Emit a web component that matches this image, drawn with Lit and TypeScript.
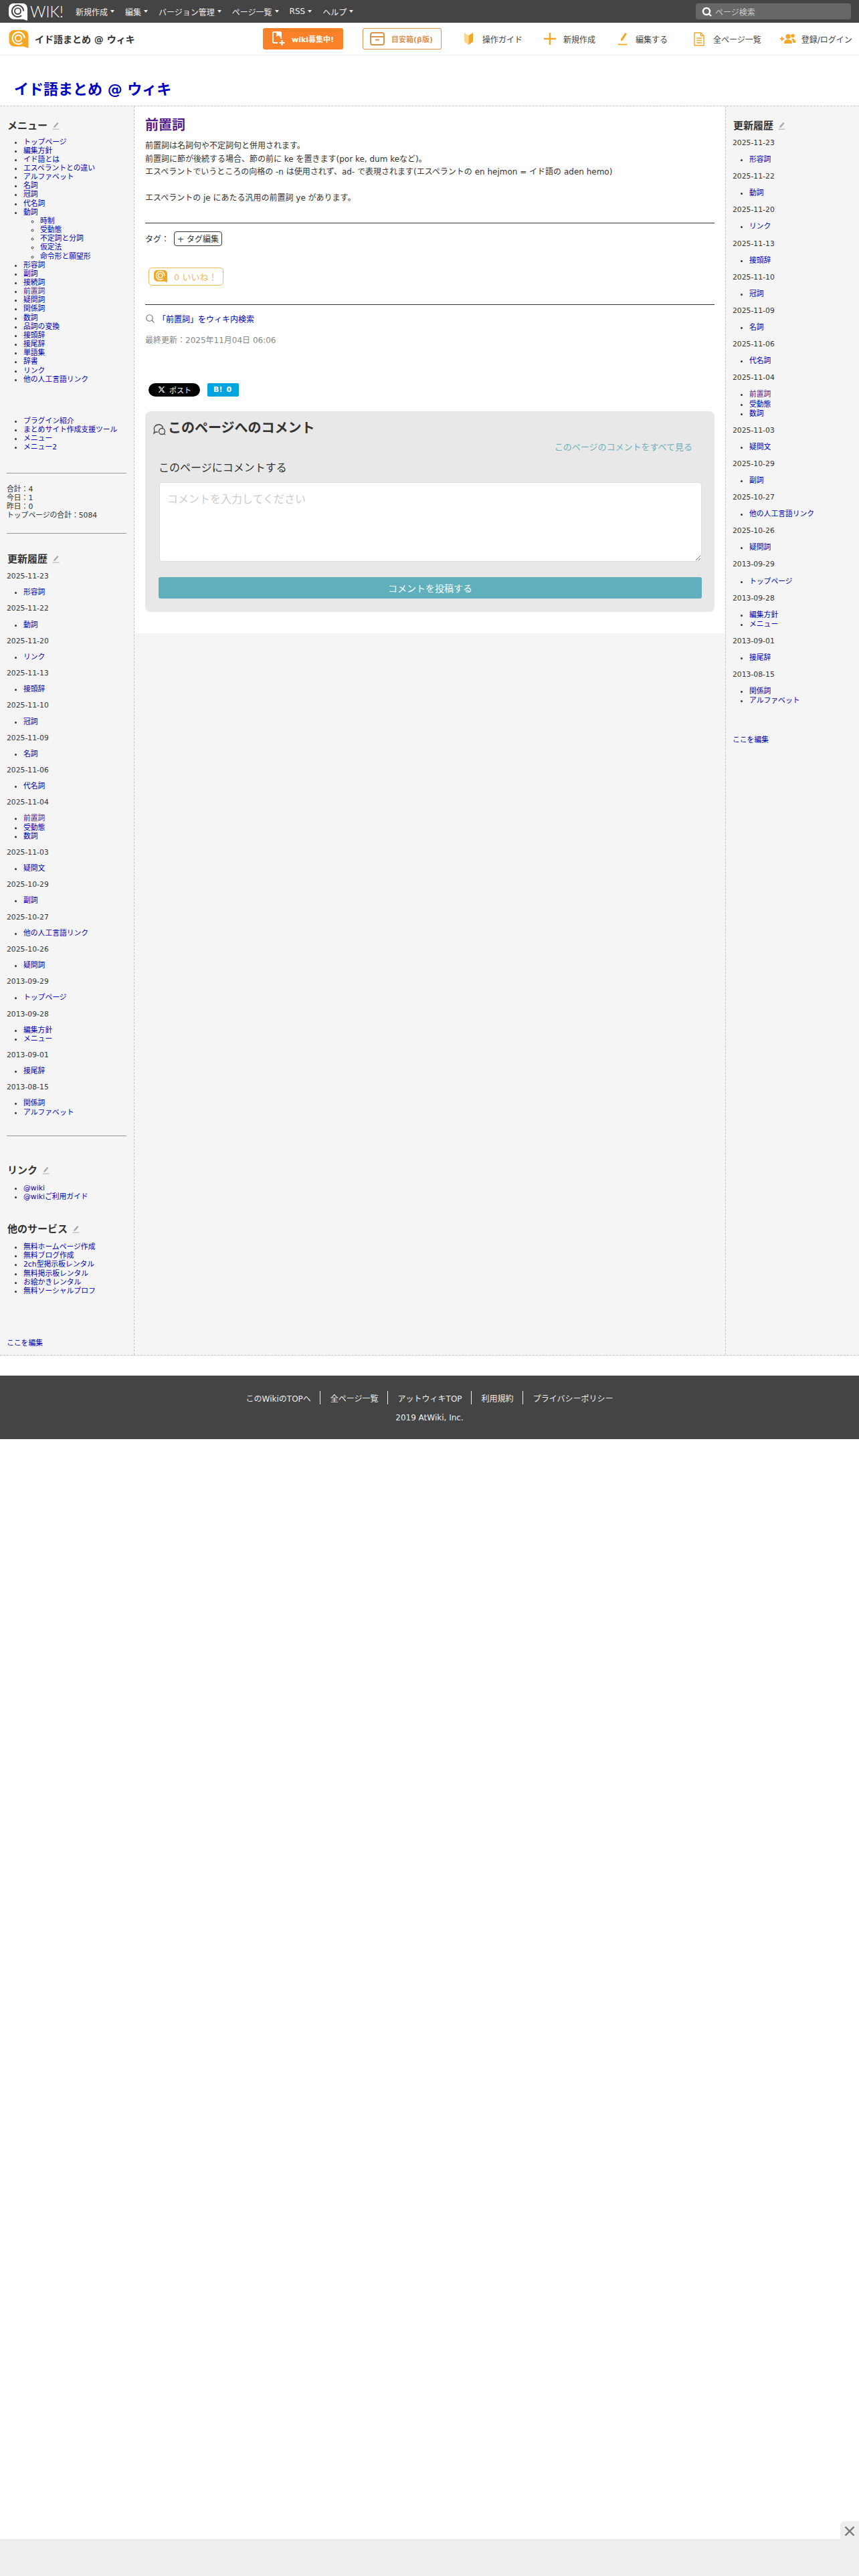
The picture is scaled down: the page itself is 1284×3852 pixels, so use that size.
import { LitElement, html, css, svg } from "lit";
import { customElement } from "lit/decorators.js";

type L = [string, boolean?];

const bubble = (bg: string, fg: string, cls: string) => html`<svg class=${cls} viewBox="0 0 32 30">
  <path d="M9 1h14a8 8 0 0 1 8 8v20l-7-2.500H9a8 8 0 0 1-8-8V9a8 8 0 0 1 8-8z" fill=${bg}/>
  ${svg`<circle cx="15.5" cy="13.5" r="9.3" fill="none" stroke=${fg} stroke-width="2.2" stroke-dasharray="50 8" transform="rotate(50 15.5 13.5)"/>
  <circle cx="15.5" cy="13.5" r="4.8" fill="none" stroke=${fg} stroke-width="2"/>`}
</svg>`;

const pencil = html`<svg class="pen" viewBox="0 0 11 12"><path d="M7.6 1 9.6 2.2 4.4 8.4 2.3 9 2.4 6.9z" fill="#aaa"/><path d="M0.5 11.2h10" stroke="#aaa" stroke-width="1"/></svg>`;

const recent: [string, L[]][] = [
  ["2025-11-23", [["形容詞"]]],
  ["2025-11-22", [["動詞"]]],
  ["2025-11-20", [["リンク"]]],
  ["2025-11-13", [["接頭辞"]]],
  ["2025-11-10", [["冠詞"]]],
  ["2025-11-09", [["名詞"]]],
  ["2025-11-06", [["代名詞"]]],
  ["2025-11-04", [["前置詞", true], ["受動態"], ["数詞"]]],
  ["2025-11-03", [["疑問文"]]],
  ["2025-10-29", [["副詞"]]],
  ["2025-10-27", [["他の人工言語リンク"]]],
  ["2025-10-26", [["疑問詞"]]],
  ["2013-09-29", [["トップページ"]]],
  ["2013-09-28", [["編集方針"], ["メニュー"]]],
  ["2013-09-01", [["接尾辞"]]],
  ["2013-08-15", [["関係詞"], ["アルファベット"]]],
];

const li = (l: L) => html`<li><a class=${l[1] ? "vis" : ""} href="#">${l[0]}</a></li>`;
const names = (s: string) => s.split(" ").map((n) => [n] as L);

@customElement("app-root")
export class AppRoot extends LitElement {
  static styles = css`
    :host { display: block; background: #fff; color: #333; font-family: "DejaVu Sans", "Noto Sans CJK JP", sans-serif; font-size: 12px; }
    * { box-sizing: border-box; }
    a { color: #0000bb; text-decoration: none; }
    a.vis { color: #551a8b; }
    .top { height: 34px; background: #444; display: flex; align-items: center; padding-left: 12px; color: #eee; }
    .logo { display: flex; align-items: center; width: 101px; height: 34px; }
    .logo-ic { width: 30px; height: 28px; margin-top: 2px; }
    .logo-tx { font-family: Lato, sans-serif; font-weight: 300; font-size: 23px; color: #fff; margin-left: 3px; line-height: 34px; }
    .nav { display: flex; gap: 16px; }
    .nav span { display: flex; align-items: center; white-space: nowrap; }
    .nav i { width: 0; height: 0; margin-left: 4px; border: 3.5px solid transparent; border-top: 4px solid #eee; border-bottom: 0; }
    .search { margin-left: auto; margin-right: 12px; width: 232px; height: 24px; background: #666; border-radius: 3px; display: flex; align-items: center; color: #ccc; padding-left: 9px; }
    .search svg { width: 15px; height: 15px; margin-right: 5px; }
    .sub { height: 49px; border-bottom: 1px solid #eee; display: flex; align-items: center; padding-left: 12px; }
    .sub-ic { width: 32px; height: 29px; }
    .sub-title { font-size: 14px; font-weight: bold; color: #333; margin-left: 8px; width: 341px; white-space: nowrap; }
    .btn { height: 32px; border-radius: 3px; display: flex; align-items: center; font-size: 11px; font-weight: bold; white-space: nowrap; }
    .btn1 { width: 120px; background: #fb8129; color: #fff; padding-left: 14px; }
    .btn2 { width: 118px; margin-left: 29px; border: 1px solid #d9924f; color: #d9924f; padding-left: 10px; }
    .btn svg { flex: none; }
    .bi1 { width: 20px; height: 22px; margin-right: 9px; }
    .bi2 { width: 22px; height: 20px; margin-right: 10px; }
    .g { display: flex; align-items: center; white-space: nowrap; color: #444; }
    .g svg { flex: none; }
    .g1 { margin-left: 33px; } .g1 svg { width: 15px; height: 20px; margin-right: 13px; }
    .g2 { margin-left: 32px; } .g2 svg { width: 18px; height: 18px; margin-right: 11px; }
    .g3 { margin-left: 33px; } .g3 svg { width: 15px; height: 20px; margin-right: 12px; }
    .g4 { margin-left: 39px; } .g4 svg { width: 16px; height: 21px; margin-right: 13px; }
    .g5 { margin-left: 28px; } .g5 svg { width: 24px; height: 16px; margin-right: 8px; }
    h1 { margin: 0; height: 75px; padding: 38px 0 0 21px; font-size: 22px; line-height: 26px; font-weight: bold; }
    h1 a { color: #0000c4; }
    .cols { display: flex; border-top: 1px dashed #c4c4c4; border-bottom: 1px dashed #c4c4c4; background: #f5f5f5; align-items: stretch; }
    .side { width: 200px; flex: none; padding: 0 10px; line-height: 13.15px; font-size: 10.8px; }
    .left { border-right: 1px dashed #c4c4c4; width: 201px; }
    .right { width: 200px; border-left: 1px dashed #c4c4c4; line-height: 14.1px; }
    .side h3 { margin: 0; padding-left: 1px; font-size: 15px; line-height: 20px; font-weight: bold; color: #333; display: flex; align-items: center; }
    .pen { width: 11px; height: 12px; margin-left: 7px; }
    .side ul { margin: 0; padding: 0 0 0 25px; }
    .side ul ul { list-style: circle; }
    .side h3.m0 { margin-top: 19px; }
    .side ul.l0 { margin-top: 7.5px; }
    .side ul.l1 { margin-top: 49px; }
    .side hr { width: 179px; margin: 0; border: 0; border-top: 1px solid #999; height: 1px; }
    .side hr.hr1 { margin-top: 31px; }
    .count { margin-top: 17px; }
    .side hr.hr2 { margin-top: 20px; }
    .side h3.h-rec { margin-top: 28px; }
    .rec { margin-top: 9px; }
    .rec ul.it { margin: 11px 0; }
    .side hr.hr3 { margin-top: 28px; }
    .side h3.h-link { margin-top: 41px; }
    .side ul.l2 { margin-top: 10px; }
    .side h3.h-oth { margin-top: 32px; }
    .edit { margin-top: 65px; display: block; }
    .edit-r { margin-top: 45px; display: block; }
    .pad-b { height: 11px; }
    .main { flex: 1; min-width: 0; }
    .panel { background: #fff; height: 788px; padding: 0 16px; }
    .panel h2 { margin: 0; padding-top: 15px; font-size: 20px; line-height: 26px; color: #551a8b; font-weight: bold; }
    .body { margin-top: 9px; line-height: 19.5px; white-space: nowrap; }
    .body .blank { height: 19.5px; }
    .panel hr { margin: 0; border: 0; border-top: 1px solid #333; height: 1px; }
    .panel hr.hr-a { margin-top: 26px; }
    .tags { display: flex; align-items: center; margin-top: 12px; height: 22px; }
    .tagb { margin-left: 7px; width: 72px; height: 22px; border: 1px solid #333; border-radius: 4px; display: flex; align-items: center; justify-content: center; }
    .like { margin: 32px 0 0 5px; width: 112px; height: 27px; border: 1px solid #f0b95a; border-radius: 5px; display: flex; align-items: center; color: #ecbb66; font-size: 13px; padding-left: 6px; }
    .like svg { width: 22px; height: 20px; margin-right: 9px; }
    .panel hr.hr-b { margin-top: 28px; }
    .find { display: flex; align-items: center; margin-top: 11px; height: 20px; }
    .find svg { width: 13px; height: 13px; margin: 0 5px 0 1px; }
    .upd { margin-top: 12px; color: #888; line-height: 20px; }
    .soc { display: flex; margin: 54px 0 0 5px; height: 20px; }
    .xb { width: 77px; height: 20px; border-radius: 10px; background: #000; color: #fff; font-size: 11px; display: flex; align-items: center; padding-left: 14px; }
    .xb svg { width: 11px; height: 11px; margin-right: 6px; }
    .hb { margin-left: 11px; width: 47px; height: 20px; border-radius: 2px; background: #00a4de; color: #fff; font-size: 11px; font-weight: bold; display: flex; align-items: center; padding-left: 9px; gap: 6px; }
    .cbox { margin-top: 22px; height: 300px; background: #e8e8e8; border-radius: 8px; padding: 0 20px; }
    .ctitle { display: flex; align-items: center; font-size: 20px; font-weight: bold; color: #333; padding-top: 11px; margin-left: -8px; line-height: 28px; }
    .ctitle svg { width: 19px; height: 18px; margin: 5px 3px 0 0; }
    .all { text-align: right; color: #6fb1bc; font-size: 13px; margin-top: 5px; line-height: 20px; margin-right: 13px; }
    .clab { font-size: 16px; margin-top: 10px; line-height: 22px; color: #333; }
    textarea { display: block; width: 811px; height: 119px; margin: 10px 0 0 1px; border: 1px solid #ddd; border-radius: 4px; background: #fff; padding: 11px; font: 16px "DejaVu Sans", "Noto Sans CJK JP", sans-serif; outline: none; }
    textarea::placeholder { color: #ccc; }
    .post { margin-top: 23px; width: 812px; height: 32px; border-radius: 3px; background: #5fb0bc; color: #fff; font-size: 14px; display: flex; align-items: center; justify-content: center; }
    .foot { margin-top: 30px; height: 95px; background: #444; color: #eee; padding-top: 23px; text-align: center; }
    .flinks { display: flex; justify-content: center; align-items: center; height: 20px; }
    .flinks i { width: 1px; height: 20px; background: #eee; margin: 0 15px 0 13px; }
    .copy { margin-top: 10px; line-height: 20px; }
    .ad { position: fixed; left: 0; right: 0; bottom: 0; height: 55px; background: #eee; border-top: 1px solid #e8e8e8; }
    .close { position: absolute; right: 0; top: -28px; width: 28px; height: 30px; background: #eee; border-radius: 6px 0 0 0; display: flex; align-items: center; justify-content: center; }
    .close svg { width: 16px; height: 16px; margin-top: -1px; }
  `;

  render() {
    const o = "#f5a623";
    const rec = recent.map(([d, it]) => html`<div>${d}</div><ul class="it">${it.map(li)}</ul>`);
    return html`
      <div class="top">
        <div class="logo">${bubble("#fff", "#444", "logo-ic")}<span class="logo-tx">WIK!</span></div>
        <div class="nav">
          ${["新規作成", "編集", "バージョン管理", "ページ一覧", "RSS", "ヘルプ"].map((t) => html`<span>${t}<i></i></span>`)}
        </div>
        <div class="search">
          <svg viewBox="0 0 15 15"><circle cx="7" cy="7" r="5" fill="none" stroke="#fff" stroke-width="2.4"/><path d="M10.5 10.5 14 14" stroke="#fff" stroke-width="2.4"/></svg>
          ページ検索
        </div>
      </div>
      <div class="sub">
        ${bubble(o, "#fff", "sub-ic")}
        <div class="sub-title">イド語まとめ @ ウィキ</div>
        <div class="btn btn1">
          <svg class="bi1" viewBox="0 0 20 22"><path d="M8 17H2a1 1 0 0 1-1-1V2a1 1 0 0 1 1-1h10a1 1 0 0 1 1 1v9" fill="none" stroke="#fff" stroke-width="1.8"/><path d="M6 1h6v7L9 6 6 8z" fill="#fff"/><path d="M14.5 13v8M10.5 17h8" stroke="#fff" stroke-width="2"/></svg>
          wiki募集中!
        </div>
        <div class="btn btn2">
          <svg class="bi2" viewBox="0 0 22 20"><rect x="1" y="1" width="20" height="18" rx="3" fill="none" stroke="#d9924f" stroke-width="2"/><path d="M1 7h20M8 11.5h6" stroke="#d9924f" stroke-width="2"/></svg>
          目安箱(β版)
        </div>
        <div class="g g1"><svg viewBox="0 0 15 20"><path d="M1 1l6.5 4v14L1 14.5z" fill="#fbd691"/><path d="M7.5 5 14 1v13.5L7.5 19z" fill="${o}"/></svg>操作ガイド</div>
        <div class="g g2"><svg viewBox="0 0 18 18"><path d="M9 0v18M0 9h18" stroke="${o}" stroke-width="2.4"/></svg>新規作成</div>
        <div class="g g3"><svg viewBox="0 0 15 20"><path d="M11.5 1l2.5 1.5-6 9.5-3 1.5.2-3.2z" fill="${o}"/><path d="M0.5 18.5h14" stroke="${o}" stroke-width="1.8"/></svg>編集する</div>
        <div class="g g4"><svg viewBox="0 0 16 21"><path d="M1 1h9.5L15 5.5V20H1zM10.5 1v4.5H15" fill="none" stroke="${o}" stroke-width="1.4"/><path d="M4 9h8M4 12.5h8M4 16h8" stroke="${o}" stroke-width="1.5"/></svg>全ページ一覧</div>
        <div class="g g5"><svg viewBox="0 0 24 16"><path d="M0 8h6M3 5v6" stroke="${o}" stroke-width="1.8"/><circle cx="12" cy="4.5" r="3.5" fill="${o}"/><path d="M6 15c0-4 2.5-6 6-6s6 2 6 6z" fill="${o}"/><circle cx="19" cy="3.5" r="2.8" fill="${o}"/><path d="M17 8c3.500-1 6 1.500 6.500 6H19.500c0-2-1-4.500-2.500-6z" fill="${o}"/></svg>登録/ログイン</div>
      </div>
      <h1><a href="#">イド語まとめ @ ウィキ</a></h1>
      <div class="cols">
        <div class="side left">
          <h3 class="m0">メニュー${pencil}</h3>
          <ul class="l0">
            ${names("トップページ 編集方針 イド語とは エスペラントとの違い アルファベット 名詞 冠詞 代名詞").map(li)}
            <li><a href="#">動詞</a>
              <ul>${names("時制 受動態 不定詞と分詞 仮定法 命令形と願望形").map(li)}</ul>
            </li>
            ${names("形容詞 副詞 接続詞").map(li)}
            ${li(["前置詞", true])}
            ${names("疑問詞 関係詞 数詞 品詞の変換 接頭辞 接尾辞 単語集 辞書 リンク 他の人工言語リンク").map(li)}
          </ul>
          <ul class="l1">${names("プラグイン紹介 まとめサイト作成支援ツール メニュー メニュー2").map(li)}</ul>
          <hr class="hr1" />
          <div class="count">合計：4<br />今日：1<br />昨日：0<br />トップページの合計：5084</div>
          <hr class="hr2" />
          <h3 class="h-rec">更新履歴${pencil}</h3>
          <div class="rec">${rec}</div>
          <hr class="hr3" />
          <h3 class="h-link">リンク${pencil}</h3>
          <ul class="l2">${names("@wiki @wikiご利用ガイド").map(li)}</ul>
          <h3 class="h-oth">他のサービス${pencil}</h3>
          <ul class="l2">${names("無料ホームページ作成 無料ブログ作成 2ch型掲示板レンタル 無料掲示板レンタル お絵かきレンタル 無料ソーシャルプロフ").map(li)}</ul>
          <a class="edit" href="#">ここを編集</a>
          <div class="pad-b"></div>
        </div>
        <div class="main">
          <div class="panel">
            <h2>前置詞</h2>
            <div class="body">
              前置詞は名詞句や不定詞句と併用されます。<br />
              前置詞に節が後続する場合、節の前に ke を置きます(por ke, dum keなど)。<br />
              エスペラントでいうところの向格の -n は使用されず、ad- で表現されます(エスペラントの en hejmon = イド語の aden hemo)
              <div class="blank"></div>
              エスペラントの je にあたる汎用の前置詞 ye があります。
            </div>
            <hr class="hr-a" />
            <div class="tags">タグ：<span class="tagb">+ タグ編集</span></div>
            <div class="like">${bubble(o, "#fff", "")}0 いいね！</div>
            <hr class="hr-b" />
            <div class="find">
              <svg viewBox="0 0 13 13"><circle cx="5.500" cy="5.500" r="4.700" fill="none" stroke="#777" stroke-width="1.100"/><path d="M9 9l3.500 3.500" stroke="#777" stroke-width="1.100"/></svg>
              <a href="#">「前置詞」をウィキ内検索</a>
            </div>
            <div class="upd">最終更新：2025年11月04日 06:06</div>
            <div class="soc">
              <div class="xb"><svg viewBox="0 0 24 24"><path fill="#fff" d="M18.244 2.25h3.308l-7.227 8.26 8.502 11.24H16.170l-5.214-6.817L4.990 21.750H1.680l7.730-8.835L1.254 2.250H8.080l4.713 6.231zm-1.161 17.520h1.833L7.084 4.126H5.117z"/></svg>ポスト</div>
              <div class="hb"><span>B!</span><span>0</span></div>
            </div>
            <div class="cbox">
              <div class="ctitle">
                <svg viewBox="0 0 19 18" fill="none" stroke="#444" stroke-width="1.300"><path d="M7 13H4l-3 2 1-4C0 7 3 2 8 2c3.500 0 6 2 6.500 5"/><circle cx="13" cy="12" r="4.500"/><path d="M16 15.500 18 17"/></svg>
                このページへのコメント
              </div>
              <div class="all">このページのコメントをすべて見る</div>
              <div class="clab">このページにコメントする</div>
              <textarea placeholder="コメントを入力してください"></textarea>
              <div class="post">コメントを投稿する</div>
            </div>
          </div>
        </div>
        <div class="side right">
          <h3 class="m0">更新履歴${pencil}</h3>
          <div class="rec">${rec}</div>
          <a class="edit-r" href="#">ここを編集</a>
        </div>
      </div>
      <div class="foot">
        <div class="flinks">
          <span>このWikiのTOPへ</span><i></i><span>全ページ一覧</span><i></i><span>アットウィキTOP</span><i></i><span>利用規約</span><i></i><span>プライバシーポリシー</span>
        </div>
        <div class="copy">2019 AtWiki, Inc.</div>
      </div>
      <div class="ad">
        <div class="close"><svg viewBox="0 0 16 16"><path d="M1.500 1.500l13 13M14.500 1.500l-13 13" stroke="#777" stroke-width="2.400"/></svg></div>
      </div>
    `;
  }
}
